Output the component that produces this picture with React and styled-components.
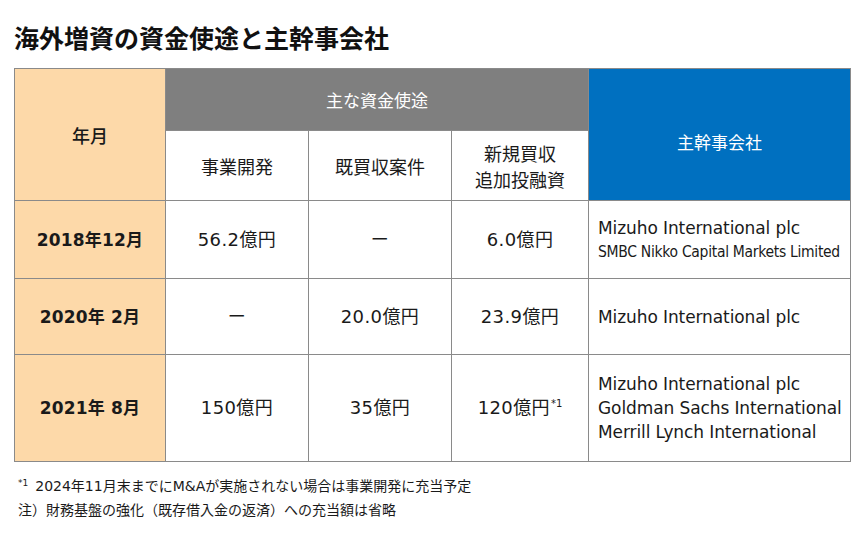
import React from 'react';
import styled, { createGlobalStyle } from 'styled-components';

const GlobalStyle = createGlobalStyle`
  html, body {
    margin: 0;
    padding: 0;
    background: #ffffff;
  }
  body {
    font-family: "DejaVu Sans", "Noto Sans CJK JP", sans-serif;
    color: #1a1a1a;
  }
`;

const Page = styled.div`
  width: 860px;
  height: 538px;
  box-sizing: border-box;
  padding: 24px 10px 0 14px;
  background: #fff;
`;

const Title = styled.h1`
  margin: 0 0 18px 0;
  font-family: "Noto Sans CJK JP", sans-serif;
  font-size: 25px;
  font-weight: 700;
  line-height: 26px;
  color: #111;
`;

const Table = styled.table`
  width: 836px;
  border-collapse: collapse;
  table-layout: fixed;
`;

const Cell = styled.td`
  border: 1px solid #8a8a8a;
  padding: 0;
  text-align: ${(p) => (p.$align === 'left' ? 'left' : 'center')};
  vertical-align: middle;
  font-size: 18px;
  letter-spacing: 0.4px;
  line-height: 24px;
  color: #1a1a1a;
  background: #fff;
  white-space: nowrap;
  ${(p) => p.$align === 'left' && 'padding-left: 9px; letter-spacing: 0;'}
`;

const YearHead = styled(Cell)`
  background: #fdd9a9;
  font-family: "Noto Sans CJK JP", sans-serif;
  font-weight: 500;
  letter-spacing: 0;
`;

const YearCell = styled(Cell)`
  background: #fdd9a9;
  font-weight: 700;
  font-size: 17px;
  letter-spacing: 0.2px;
`;

const GrayHead = styled(Cell)`
  background: #7f7f7f;
  color: #fff;
  font-family: "Noto Sans CJK JP", sans-serif;
  font-size: 17px;
  letter-spacing: 0;
`;

const BlueHead = styled(Cell)`
  background: #0070c0;
  color: #fff;
  font-family: "Noto Sans CJK JP", sans-serif;
  font-size: 17px;
  letter-spacing: 0;
  padding-top: 14px;
`;

const SubHead = styled(Cell)`
  font-family: "Noto Sans CJK JP", sans-serif;
  letter-spacing: 0;
  line-height: 26px;
`;

const Sup = styled.sup`
  font-size: 10px;
  line-height: 0;
  vertical-align: 7px;
  margin-left: 1px;
  letter-spacing: 0;
`;

const Company = styled.div`
  font-size: 17px;
  line-height: 24px;
  letter-spacing: -0.1px;
`;

const CompanyNarrow = styled.div`
  font-family: "DejaVu Sans Condensed", "DejaVu Sans", sans-serif;
  font-size: 15.5px;
  line-height: 24px;
  letter-spacing: -0.3px;
`;

const Notes = styled.div`
  margin-top: 12px;
  padding-left: 4px;
  font-size: 14px;
  line-height: 24px;
  color: #1a1a1a;
`;

const NoteMark = styled.sup`
  font-size: 9px;
  line-height: 0;
  vertical-align: 5px;
  margin-right: 7px;
`;

const rows = [
  {
    year: '2018年12月',
    dev: '56.2億円',
    acq: 'ー',
    add: '6.0億円',
    companies: [
      { name: 'Mizuho International plc' },
      { name: 'SMBC Nikko Capital Markets Limited', narrow: true },
    ],
    h: 78,
  },
  {
    year: '2020年 2月',
    dev: 'ー',
    acq: '20.0億円',
    add: '23.9億円',
    companies: [{ name: 'Mizuho International plc' }],
    h: 76,
  },
  {
    year: '2021年 8月',
    dev: '150億円',
    acq: '35億円',
    add: '120億円',
    mark: '*1',
    companies: [
      { name: 'Mizuho International plc' },
      { name: 'Goldman Sachs International' },
      { name: 'Merrill Lynch International' },
    ],
    h: 107,
  },
];

export default function App() {
  return (
    <Page>
      <GlobalStyle />
      <Title>海外増資の資金使途と主幹事会社</Title>
      <Table>
        <colgroup>
          <col style={{ width: 151 }} />
          <col style={{ width: 143 }} />
          <col style={{ width: 143 }} />
          <col style={{ width: 137 }} />
          <col style={{ width: 262 }} />
        </colgroup>
        <tbody>
          <tr style={{ height: 62 }}>
            <YearHead rowSpan={2}>年月</YearHead>
            <GrayHead colSpan={3}>主な資金使途</GrayHead>
            <BlueHead rowSpan={2}>主幹事会社</BlueHead>
          </tr>
          <tr style={{ height: 70 }}>
            <SubHead>事業開発</SubHead>
            <SubHead>既買収案件</SubHead>
            <SubHead>
              新規買収
              <br />
              追加投融資
            </SubHead>
          </tr>
          {rows.map((r) => (
            <tr key={r.year} style={{ height: r.h }}>
              <YearCell>{r.year}</YearCell>
              <Cell>{r.dev}</Cell>
              <Cell>{r.acq}</Cell>
              <Cell>
                {r.add}
                {r.mark && <Sup>{r.mark}</Sup>}
              </Cell>
              <Cell $align="left">
                {r.companies.map((c) =>
                  c.narrow ? (
                    <CompanyNarrow key={c.name}>{c.name}</CompanyNarrow>
                  ) : (
                    <Company key={c.name}>{c.name}</Company>
                  )
                )}
              </Cell>
            </tr>
          ))}
        </tbody>
      </Table>
      <Notes>
        <div>
          <NoteMark>*1</NoteMark>2024年11月末までにM&Aが実施されない場合は事業開発に充当予定
        </div>
        <div>注）財務基盤の強化（既存借入金の返済）への充当額は省略</div>
      </Notes>
    </Page>
  );
}
